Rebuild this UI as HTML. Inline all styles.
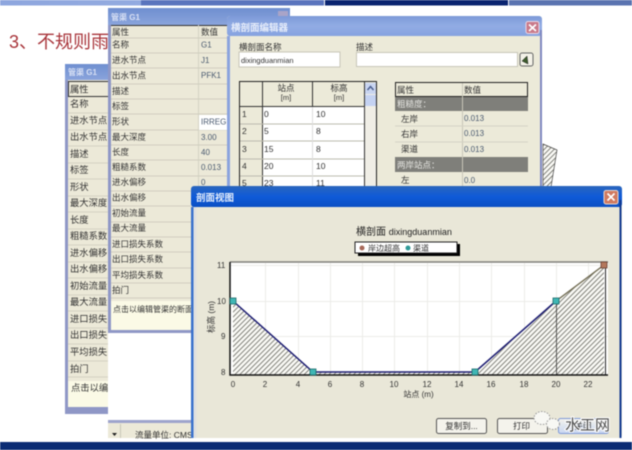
<!DOCTYPE html>
<html><head><meta charset="utf-8"><style>
html,body{margin:0;padding:0;background:#fff;width:632px;height:450px;overflow:hidden}
svg{display:block;filter:blur(.45px)}
text{font-family:"Liberation Sans","Noto Sans CJK SC",sans-serif;fill:#333}
</style></head><body>
<svg width="632" height="450" viewBox="0 0 632 450" xmlns="http://www.w3.org/2000/svg">
<defs>
<pattern id="h" width="3.500" height="3.500" patternUnits="userSpaceOnUse" patternTransform="rotate(-45)"><rect width="3.500" height="3.500" fill="#fafaf6"/><rect width="3.500" height=".8" fill="#66665e"/></pattern>
<linearGradient id="t1" x1="0" y1="0" x2="0" y2="1"><stop offset="0" stop-color="#6f8fd0"/><stop offset="1" stop-color="#8aa4dc"/></linearGradient>
<linearGradient id="t3" x1="0" y1="0" x2="0" y2="1"><stop offset="0" stop-color="#7d9ad8"/><stop offset=".5" stop-color="#92ace4"/><stop offset="1" stop-color="#86a2e0"/></linearGradient>
<linearGradient id="t4" x1="0" y1="0" x2="0" y2="1"><stop offset="0" stop-color="#2a66bd"/><stop offset=".5" stop-color="#0f5ad8"/><stop offset="1" stop-color="#0a4fc4"/></linearGradient>
<linearGradient id="tb" x1="0" y1="0" x2="1" y2="0"><stop offset="0" stop-color="#8ea6de"/><stop offset="1" stop-color="#93abe0"/></linearGradient>
<linearGradient id="b3" x1="0" y1="0" x2="0" y2="1"><stop offset="0" stop-color="#f4f3ec"/><stop offset="1" stop-color="#c9d6f2"/></linearGradient>
</defs>
<rect width="632" height="450" fill="#fff"/>
<!-- top bar -->
<rect x="0" y="0" width="141" height="5.500" fill="url(#tb)"/>
<rect x="141" y="0" width="183" height="5.500" fill="#5a74bd"/>
<rect x="325" y="0" width="183" height="5.500" fill="#0a2470"/>
<rect x="509" y="0" width="123" height="5.500" fill="#5a73b0"/>
<!-- bottom bar -->
<rect x="0" y="442" width="632" height="8" fill="#0b2c74"/>
<!-- red heading -->
<text x="9" y="48" font-size="18" style="fill:#a8343a">3、不规则雨</text>

<!-- hatch behind -->
<path d="M543 144L557 150L551 187H543Z" fill="url(#h)" stroke="#444" stroke-width=".7"/>

<!-- window 1 -->
<rect x="65" y="64" width="50" height="350" fill="#8f97c6"/>
<rect x="65" y="64" width="50" height="16" fill="url(#t1)"/>
<text x="68" y="75" font-size="8" font-weight="bold" style="fill:#d8e0f4">管渠 G1</text>
<rect x="68" y="80" width="47" height="327" fill="#ece9d8"/>
<rect x="68.500" y="81.500" width="46" height="15" fill="#ece9d8" stroke="#333"/>
<path d="M68 113H115M68 130H115M68 146H115M68 163H115M68 179H115M68 196H115M68 212H115M68 229H115M68 245H115M68 262H115M68 278H115M68 295H115M68 311H115M68 328H115M68 344H115M68 361H115M68 377H115" stroke="#d4d2c4"/>
<g font-size="9.300">
<text x="70" y="92.500">属性</text><text x="70" y="107">名称</text><text x="70" y="123.500">进水节点</text><text x="70" y="140">出水节点</text><text x="70" y="157">描述</text><text x="70" y="173">标签</text><text x="70" y="190">形状</text><text x="70" y="206">最大深度</text><text x="70" y="223">长度</text><text x="70" y="239">粗糙系数</text><text x="70" y="256">进水偏移</text><text x="70" y="272">出水偏移</text><text x="70" y="289">初始流量</text><text x="70" y="305">最大流量</text><text x="70" y="322">进口损失系</text><text x="70" y="338">出口损失系</text><text x="70" y="355">平均损失系</text><text x="70" y="372">拍门</text>
</g>
<rect x="68" y="381" width="47" height="26" fill="#fbfae6"/>
<text x="71" y="391" font-size="9.300">点击以编辑</text>

<!-- window 2 -->
<rect x="108" y="8" width="182" height="430" fill="#fff"/>
<rect x="108" y="8" width="182" height="17" fill="url(#t1)"/>
<text x="111" y="20" font-size="8" font-weight="bold" style="fill:#d8e0f4">管渠 G1</text>
<rect x="278" y="11" width="10" height="10" fill="#a9a4c8"/>
<rect x="108" y="25" width="3" height="308" fill="#8f97c6"/>
<rect x="111" y="25" width="120" height="305" fill="#ece9d8"/>
<path d="M111 25.500H231" stroke="#333"/>
<rect x="198" y="25" width="1" height="275" fill="#d4d2c4"/>
<path d="M111 38H231M111 53H231M111 68H231M111 84H231M111 99H231M111 114H231M111 130H231M111 145H231M111 160H231M111 176H231M111 191H231M111 206H231M111 222H231M111 237H231M111 252H231M111 268H231M111 283H231M111 298H231" stroke="#d0cec0"/>
<g font-size="8.500">
<text x="112" y="35">属性</text><text x="112" y="47.500">名称</text><text x="112" y="63">进水节点</text><text x="112" y="78.500">出水节点</text><text x="112" y="94">描述</text><text x="112" y="109">标签</text><text x="112" y="124.500">形状</text><text x="112" y="140">最大深度</text><text x="112" y="155">长度</text><text x="112" y="170">粗糙系数</text><text x="112" y="185">进水偏移</text><text x="112" y="200.500">出水偏移</text><text x="112" y="216">初始流量</text><text x="112" y="231">最大流量</text><text x="112" y="247">进口损失系数</text><text x="112" y="262">出口损失系数</text><text x="112" y="278">平均损失系数</text><text x="112" y="293">拍门</text>
<text x="201" y="35">数值</text>
<rect x="199" y="115" width="32" height="15" fill="#fff"/>
</g>
<g font-size="8">
<text x="201" y="47.500" style="fill:#4a5a70">G1</text><text x="201" y="63" style="fill:#4a5a70">J1</text><text x="201" y="78" style="fill:#4a5a70">PFK1</text>
<text x="201" y="124.500" style="fill:#4a5a70">IRREGUL</text><text x="201" y="140" style="fill:#4a5a70">3.00</text><text x="201" y="155" style="fill:#4a5a70">40</text><text x="201" y="170" style="fill:#4a5a70">0.013</text><text x="201" y="185" style="fill:#4a5a70">0</text>
</g>
<rect x="111" y="301" width="81" height="29" fill="#fbfae6"/>
<text x="113" y="312" font-size="8">点击以编辑管渠的断面</text>
<rect x="108" y="330" width="85" height="3" fill="#8f97c6"/>
<rect x="108" y="420" width="85" height="3" fill="#9ea4cc"/>
<rect x="108" y="423" width="85" height="15" fill="#ece9d8"/>
<path d="M112 433H117L114.500 436Z" fill="#222"/>
<path d="M120.500 424V438" stroke="#c8c6b8"/>
<text x="135" y="438" font-size="8.500">流量单位: CMS</text>

<!-- window 3 -->
<rect x="227" y="16" width="315" height="175" rx="3" fill="#ecead9"/>
<rect x="227" y="16" width="315" height="20" rx="3" fill="url(#t3)"/>
<rect x="227" y="36" width="3" height="155" fill="#8ba3de"/><rect x="540" y="30" width="2" height="160" fill="#7f88c0"/>
<text x="231" y="31" font-size="9.500" font-weight="bold" style="fill:#e8eefa">横剖面编辑器</text>
<rect x="526" y="21.500" width="13" height="12" rx="2" fill="#c97a8a" stroke="#e9d8e6"/>
<path d="M529 24.500L536 31M536 24.500L529 31" stroke="#fff" stroke-width="1.700"/>
<text x="239" y="50" font-size="8.500">横剖面名称</text>
<text x="356" y="50" font-size="8.500">描述</text>
<rect x="239" y="52" width="101" height="15" fill="#fff" stroke="#c8c6b8"/>
<text x="241" y="63" font-size="7.500">dixingduanmian</text>
<rect x="356.500" y="52.500" width="161" height="14" fill="#fff" stroke="#c8c6b8"/>
<rect x="520" y="53" width="13" height="13" rx="2" fill="#f4f2e8" stroke="#666"/>
<path d="M522 61L527 56L528 64Z" fill="#3d5c2d" stroke="#222" stroke-width=".5"/>
<!-- data grid -->
<rect x="239.500" y="81.500" width="137" height="108" fill="#ecead9" stroke="#222"/>
<path d="M262.500 82V190M364.500 82V190M312.500 82V106" stroke="#333"/>
<path d="M240 106.500H364" stroke="#333"/>
<rect x="263" y="107" width="101" height="83" fill="#fff"/>
<path d="M240 124H364M240 141H364M240 159H364M240 176H364" stroke="#bdbbae"/>
<path d="M312.500 107V190" stroke="#ddd"/>
<rect x="365" y="82" width="11" height="108" fill="#f0eee6"/>
<rect x="365" y="83" width="11" height="11" fill="#c8d4f0"/>
<path d="M367.500 90L370.500 86.500L373.500 90" fill="none" stroke="#4a5f90" stroke-width="1.500"/>
<rect x="365" y="95" width="11" height="11" fill="#c4d2f2"/>
<g font-size="8.500">
<text x="286" y="91" text-anchor="middle">站点</text><text x="286" y="100" text-anchor="middle" font-size="7.500">[m]</text>
<text x="339" y="91" text-anchor="middle">标高</text><text x="339" y="100" text-anchor="middle" font-size="7.500">[m]</text>
<text x="242" y="117">1</text><text x="242" y="134">2</text><text x="242" y="152">3</text><text x="242" y="169">4</text><text x="242" y="186">5</text>
<text x="264" y="117">0</text><text x="264" y="134">5</text><text x="264" y="152">15</text><text x="264" y="169">20</text><text x="264" y="186">23</text>
<text x="316" y="117">10</text><text x="316" y="134">8</text><text x="316" y="152">8</text><text x="316" y="169">10</text><text x="316" y="186">11</text>
</g>
<!-- prop grid -->
<rect x="395.500" y="82.500" width="132" height="14" fill="#ecead9" stroke="#222"/>
<rect x="395" y="97" width="133" height="14" fill="#7f7f7a"/>
<rect x="395" y="157" width="133" height="15" fill="#7f7f7a"/>
<path d="M462.500 83V190" stroke="#c8c6b8"/>
<path d="M395 126H528M395 142H528M395 187H528" stroke="#d4d2c4"/>
<g font-size="8.500">
<text x="397" y="93">属性</text><text x="464" y="93">数值</text>
<text x="397" y="107" style="fill:#e4e4e0">粗糙度：</text><text x="397" y="168" style="fill:#e4e4e0">两岸站点：</text>
<text x="401" y="122">左岸</text><text x="401" y="137">右岸</text><text x="401" y="152">渠道</text><text x="401" y="183">左</text>
</g>
<g font-size="8">
<text x="464" y="121" style="fill:#4a5a70">0.013</text><text x="464" y="136" style="fill:#4a5a70">0.013</text><text x="464" y="152" style="fill:#4a5a70">0.013</text><text x="464" y="183" style="fill:#4a5a70">0.0</text>
</g>

<!-- window 4 -->
<rect x="191" y="186" width="431" height="252" rx="3" fill="#e9e7d8"/>
<rect x="191" y="186" width="431" height="21" rx="3" fill="url(#t4)"/>
<rect x="191" y="207" width="2.500" height="231" fill="#3a72cc"/>
<rect x="193.500" y="207" width="3" height="231" fill="#dfe0e0"/>
<rect x="619.500" y="200" width="2" height="238" fill="#123a90"/>
<text x="196" y="201" font-size="9.500" font-weight="bold" style="fill:#e8f0fc">剖面视图</text>
<rect x="604" y="190.500" width="14" height="13.500" rx="2" fill="#d07a60" stroke="#e8d8d0"/>
<path d="M607.500 193.500L614.500 200.500M614.500 193.500L607.500 200.500" stroke="#fff" stroke-width="1.700"/>
<text x="356" y="235" font-size="10" style="fill:#222">横剖面 <tspan font-size="9">dixingduanmian</tspan></text>
<rect x="358" y="244" width="102" height="12" fill="#000"/>
<rect x="355" y="242" width="102" height="11" fill="#fff" stroke="#222"/>
<circle cx="362" cy="248" r="2.500" fill="#a86a5a"/>
<circle cx="408" cy="248" r="2.500" fill="#2f9a98"/>
<text x="368" y="251" font-size="8">岸边超高</text><text x="413" y="251" font-size="8">渠道</text>
<!-- plot -->
<rect x="230" y="262" width="378" height="113" fill="#fff"/>
<path d="M265.500 263V375M298.500 263V375M330.500 263V375M362.500 263V375M394.500 263V375M427.500 263V375M459.500 263V375M491.500 263V375M524.500 263V375M556.500 263V375M588.500 263V375M230 301.500H608M230 336.500H608M230 265.500H608" stroke="#ecece8"/>
<path d="M233 301L313 372V375H233Z" fill="url(#h)"/>
<path d="M313 371.500H475V375H313Z" fill="url(#h)"/>
<path d="M475 372L556 301L604 265V375H475Z" fill="url(#h)"/>
<path d="M556.500 301V375" stroke="#333" stroke-width=".8"/>
<path d="M605.500 263V375" stroke="#222"/>
<path d="M233 301L313 372H475L556 301" fill="none" stroke="#1c1c72" stroke-width="1.500"/>
<path d="M556 301L604 265" fill="none" stroke="#6f6a50" stroke-width="1.400"/>
<path d="M230 262H608" stroke="#7f7f7a" stroke-width="1.500"/>
<path d="M230 262V375H608" fill="none" stroke="#111" stroke-width="1.500"/>
<g fill="#3fb7b5" stroke="#1c6a6a" stroke-width=".8"><rect x="230" y="298" width="6" height="6"/><rect x="310" y="369" width="6" height="6"/><rect x="472" y="369" width="6" height="6"/><rect x="553" y="298" width="6" height="6"/></g>
<rect x="601" y="262" width="6" height="6" fill="#b5785c" stroke="#6a4030" stroke-width=".8"/>
<g font-size="8" style="fill:#444">
<text x="217" y="268">11</text><text x="217" y="304">10</text><text x="221" y="339">9</text><text x="221" y="375">8</text>
<text x="233" y="387" text-anchor="middle">0</text><text x="265" y="387" text-anchor="middle">2</text><text x="298" y="387" text-anchor="middle">4</text><text x="330" y="387" text-anchor="middle">6</text><text x="362" y="387" text-anchor="middle">8</text><text x="394" y="387" text-anchor="middle">10</text><text x="427" y="387" text-anchor="middle">12</text><text x="459" y="387" text-anchor="middle">14</text><text x="491" y="387" text-anchor="middle">16</text><text x="524" y="387" text-anchor="middle">18</text><text x="556" y="387" text-anchor="middle">20</text><text x="588" y="387" text-anchor="middle">22</text>
</g>
<text x="418.500" y="397" text-anchor="middle" font-size="8">站点 (m)</text>
<text transform="translate(214,333) rotate(-90)" font-size="8.500">标高 (m)</text>
<!-- buttons -->
<rect x="436.500" y="418.500" width="50" height="15" rx="2" fill="#f4f3ec" stroke="#555"/>
<text x="461.500" y="429" text-anchor="middle" font-size="8.500">复制到...</text>
<rect x="497.500" y="418.500" width="50" height="15" rx="2" fill="#f4f3ec" stroke="#555"/>
<text x="521.500" y="429" text-anchor="middle" font-size="8.500">打印</text>
<rect x="558.500" y="418.500" width="50" height="15" rx="2" fill="url(#b3)" stroke="#7f9ad8"/>
<text x="583" y="429" text-anchor="middle" font-size="8.500">关闭</text>
<!-- watermark -->
<ellipse cx="542" cy="418" rx="8" ry="6.500" fill="#f8f8f4" stroke="#999" stroke-dasharray="1.500 1.500"/>
<ellipse cx="553" cy="424" rx="6.500" ry="5.500" fill="#f8f8f4" stroke="#999" stroke-dasharray="1.500 1.500"/>
<text x="565" y="430" font-size="15" stroke="#fff" stroke-width="2" paint-order="stroke" style="fill:#4a4a4a">水工网</text>
</svg>
</body></html>
